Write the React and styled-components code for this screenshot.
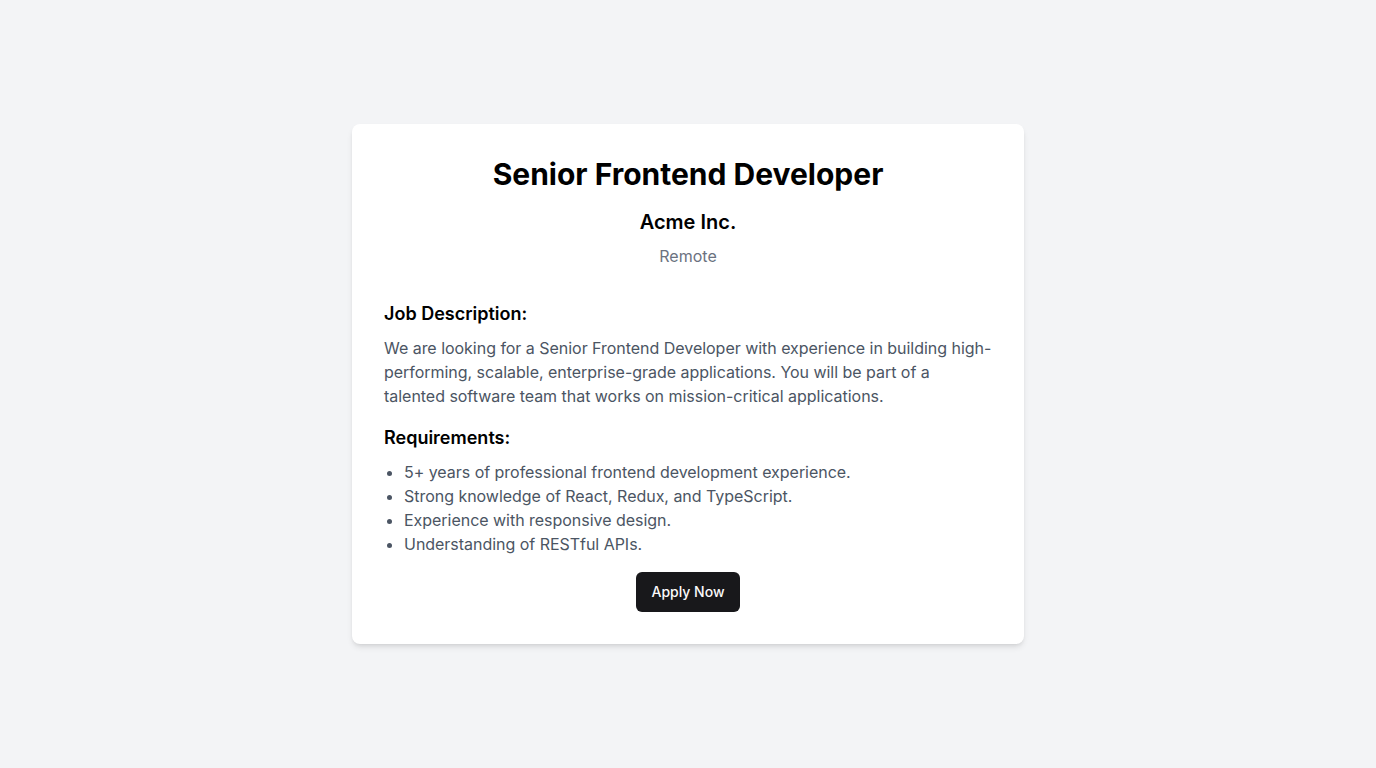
import React from 'react'
import styled, { createGlobalStyle } from 'styled-components'

const GlobalStyle = createGlobalStyle`
  * { box-sizing: border-box; }
  body {
    margin: 0;
    background: #f3f4f6;
    font-family: Inter, "Liberation Sans", sans-serif;
    color: #000;
  }
`

const Page = styled.div`
  min-height: 100vh;
  display: flex;
  align-items: center;
  justify-content: center;
`

const Card = styled.div`
  width: 672px;
  background: #fff;
  border-radius: 8px;
  padding: 32px;
  box-shadow: 0 4px 6px -1px rgba(0, 0, 0, 0.1), 0 2px 4px -2px rgba(0, 0, 0, 0.1);
`

const Header = styled.header`
  display: flex;
  flex-direction: column;
  align-items: center;
  text-align: center;
  margin-bottom: 32px;
`

const Title = styled.h1`
  margin: 0;
  font-size: 30px;
  line-height: 36px;
  font-weight: 700;
`

const Company = styled.h2`
  margin: 16px 0 0;
  font-size: 20px;
  line-height: 28px;
  font-weight: 600;
`

const Location = styled.p`
  margin: 8px 0 0;
  font-size: 16px;
  line-height: 24px;
  color: #6b7280;
`

const Section = styled.section`
  margin-top: ${p => (p.first ? '0' : '16px')};
`

const SectionTitle = styled.h3`
  margin: 0 0 8px;
  font-size: 18px;
  line-height: 28px;
  font-weight: 600;
`

const Text = styled.p`
  margin: 0;
  font-size: 16px;
  line-height: 24px;
  letter-spacing: -0.03px;
  color: #4b5563;
`

const List = styled.ul`
  margin: 0;
  padding-left: 20px;
  list-style: disc;
  font-size: 16px;
  line-height: 24px;
  letter-spacing: -0.03px;
  color: #4b5563;
`

const Footer = styled.div`
  display: flex;
  justify-content: center;
  margin-top: 16px;
`

const Button = styled.button`
  height: 40px;
  padding: 0 15px 1px;
  border: none;
  border-radius: 6px;
  background: #18181b;
  color: #fafafa;
  font-family: inherit;
  font-size: 14px;
  font-weight: 500;
  cursor: pointer;
`

const requirements = [
  '5+ years of professional frontend development experience.',
  'Strong knowledge of React, Redux, and TypeScript.',
  'Experience with responsive design.',
  'Understanding of RESTful APIs.',
]

const App = () => {
  return (
    <Page>
      <GlobalStyle />
      <Card>
        <Header>
          <Title>Senior Frontend Developer</Title>
          <Company>Acme Inc.</Company>
          <Location>Remote</Location>
        </Header>
        <Section first>
          <SectionTitle>Job Description:</SectionTitle>
          <Text>
            We are looking for a Senior Frontend Developer with experience in building high-performing,
            scalable, enterprise-grade applications. You will be part of a talented software team that
            works on mission-critical applications.
          </Text>
        </Section>
        <Section>
          <SectionTitle>Requirements:</SectionTitle>
          <List>
            {requirements.map(r => (
              <li key={r}>{r}</li>
            ))}
          </List>
        </Section>
        <Footer>
          <Button type="button">Apply Now</Button>
        </Footer>
      </Card>
    </Page>
  )
}

export default App
